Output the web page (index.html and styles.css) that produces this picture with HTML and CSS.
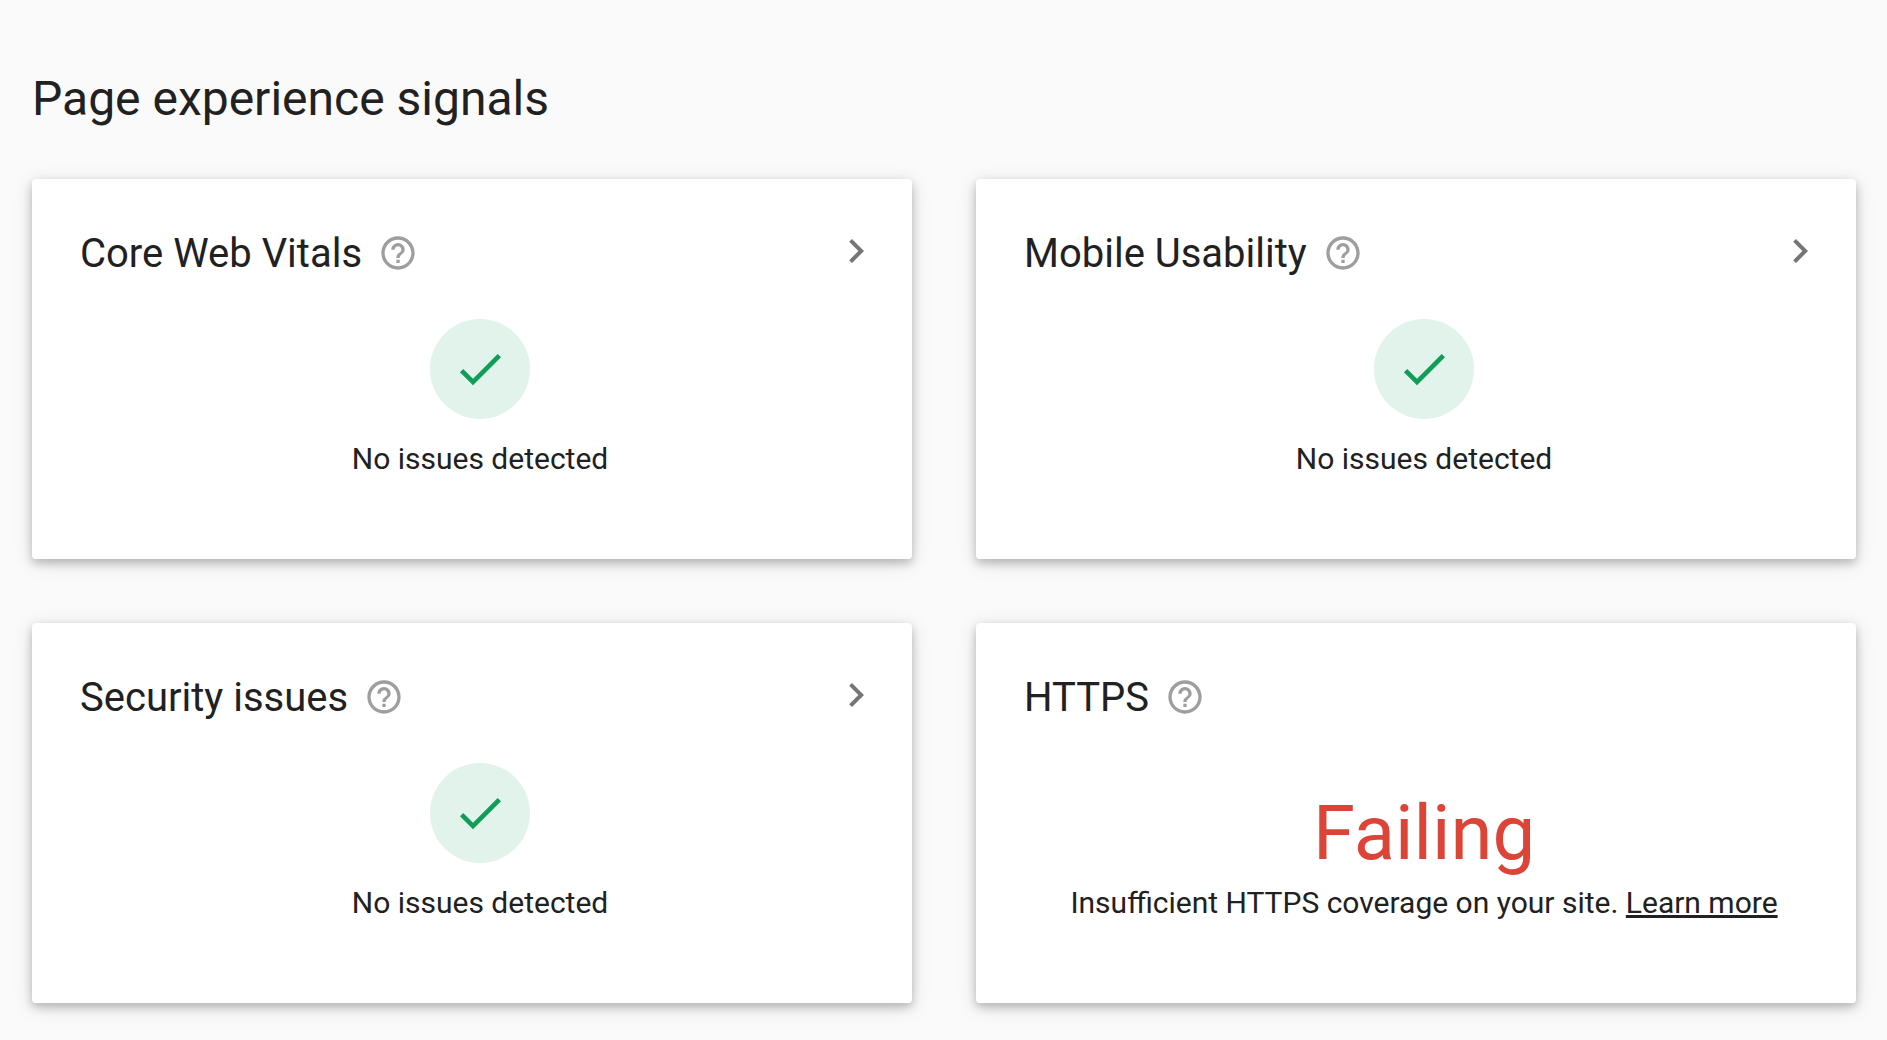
FILE: index.html
```html
<!DOCTYPE html>
<html lang="en">
<head>
  <meta charset="utf-8">
  <meta name="viewport" content="width=device-width, initial-scale=1">
  <title>Page experience signals</title>
  <link rel="stylesheet" href="styles.css">
</head>
<body>
  <svg class="sprite" aria-hidden="true">
    <symbol id="help" viewBox="0 0 24 24"><path d="M11 18h2v-2h-2v2zm1-16C6.48 2 2 6.48 2 12s4.48 10 10 10 10-4.48 10-10S17.520 2 12 2zm0 18c-4.410 0-8-3.590-8-8s3.590-8 8-8 8 3.590 8 8-3.590 8-8 8zm0-14c-2.210 0-4 1.790-4 4h2c0-1.100.9-2 2-2s2 .9 2 2c0 2-3 1.750-3 5h2c0-2.250 3-2.500 3-5 0-2.210-1.790-4-4-4z"/></symbol>
    <symbol id="chevron" viewBox="0 0 24 24"><path d="M10 6L8.590 7.410 13.170 12l-4.580 4.590L10 18l6-6z"/></symbol>
    <symbol id="check" viewBox="0 0 24 24"><path d="M9 16.170L4.830 12l-1.420 1.410L9 19 21 7l-1.410-1.410z"/></symbol>
  </svg>
  <main class="page">
    <h1 class="page-title">Page experience signals</h1>
    <div class="cards">
      <section class="card">
        <header class="card-header">
          <h2 class="card-title">Core Web Vitals</h2>
          <button class="help" type="button" aria-label="About Core Web Vitals"><svg class="help-icon"><use href="#help"/></svg></button>
          <a class="open" href="#core-web-vitals" aria-label="Open Core Web Vitals"><svg class="open-icon"><use href="#chevron"/></svg></a>
        </header>
        <div class="card-body">
          <span class="badge"><svg class="badge-icon"><use href="#check"/></svg></span>
          <p class="message message-ok">No issues detected</p>
        </div>
      </section>
      <section class="card">
        <header class="card-header">
          <h2 class="card-title">Mobile Usability</h2>
          <button class="help" type="button" aria-label="About Mobile Usability"><svg class="help-icon"><use href="#help"/></svg></button>
          <a class="open" href="#mobile-usability" aria-label="Open Mobile Usability"><svg class="open-icon"><use href="#chevron"/></svg></a>
        </header>
        <div class="card-body">
          <span class="badge"><svg class="badge-icon"><use href="#check"/></svg></span>
          <p class="message message-ok">No issues detected</p>
        </div>
      </section>
      <section class="card">
        <header class="card-header">
          <h2 class="card-title">Security issues</h2>
          <button class="help" type="button" aria-label="About Security issues"><svg class="help-icon"><use href="#help"/></svg></button>
          <a class="open" href="#security-issues" aria-label="Open Security issues"><svg class="open-icon"><use href="#chevron"/></svg></a>
        </header>
        <div class="card-body">
          <span class="badge"><svg class="badge-icon"><use href="#check"/></svg></span>
          <p class="message message-ok">No issues detected</p>
        </div>
      </section>
      <section class="card">
        <header class="card-header">
          <h2 class="card-title">HTTPS</h2>
          <button class="help" type="button" aria-label="About HTTPS"><svg class="help-icon"><use href="#help"/></svg></button>
        </header>
        <div class="card-body">
          <strong class="status">Failing</strong>
          <p class="message">Insufficient HTTPS coverage on your site. <a class="learn" href="#learn-more">Learn more</a></p>
        </div>
      </section>
    </div>
  </main>
</body>
</html>
```
FILE: styles.css
```css
* {
  box-sizing: border-box;
}

body {
  margin: 0;
  background: #fafafa;
  color: #212121;
  font-family: Roboto, "Liberation Sans", sans-serif;
}

.sprite {
  display: none;
}

.page {
  padding: 67px 31px 36px 32px;
}

.page-title {
  margin: 0 0 48px;
  font-size: 48px;
  font-weight: 400;
  line-height: 64px;
}

.cards {
  display: grid;
  grid-template-columns: repeat(2, minmax(0, 1fr));
  gap: 64px;
}

.card {
  display: flex;
  flex-direction: column;
  padding: 48px 32px 80px 48px;
  border-radius: 4px;
  background: #fff;
  box-shadow: 0 4px 20px rgba(0, 0, 0, 0.12), 0 4px 10px rgba(0, 0, 0, 0.22);
}

.card-header {
  display: flex;
  align-items: flex-start;
  gap: 16px;
}

.card-title {
  margin: 0;
  font-size: 40px;
  font-weight: 400;
  line-height: 54px;
}

.help {
  padding: 6px 0;
  border: 0;
  background: none;
  cursor: pointer;
}

.help-icon {
  display: block;
  width: 40px;
  height: 40px;
  fill: #9e9e9e;
}

.open {
  margin-left: auto;
}

.open-icon {
  display: block;
  width: 48px;
  height: 48px;
  fill: #757575;
}

.card-body {
  display: flex;
  flex: 1;
  flex-direction: column;
  align-items: center;
  justify-content: flex-end;
  padding-top: 38px;
  text-align: center;
}

.badge {
  display: flex;
  align-items: center;
  justify-content: center;
  width: 100px;
  height: 100px;
  border-radius: 50%;
  background: #e1f3eb;
}

.badge-icon {
  width: 56px;
  height: 56px;
  fill: #0f9d58;
}

.message {
  margin: 0;
  font-size: 30px;
  line-height: 40px;
}

.message-ok {
  margin-top: 20px;
}

.status {
  color: #db4437;
  font-size: 76px;
  font-weight: 400;
  line-height: 100px;
}

.learn {
  color: inherit;
}
```
